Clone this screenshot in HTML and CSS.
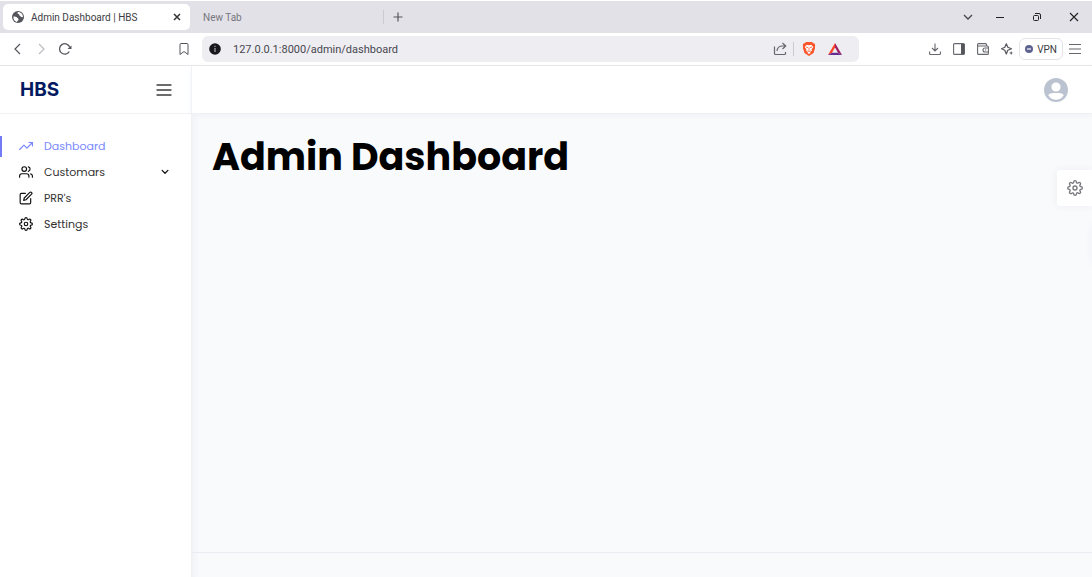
FILE: index.html
```html
<!DOCTYPE html>
<html lang="en">
<head>
<meta charset="utf-8">
<meta name="viewport" content="width=device-width, initial-scale=1">
<title>Admin Dashboard | HBS</title>
<link rel="stylesheet" href="styles.css">
</head>
<body>
<div class="browser">
  <div class="tabs">
    <div class="tab tab-active">
      <svg class="i12" viewBox="0 0 24 24"><circle cx="12" cy="12" r="12" fill="#55565c"/><path fill="#fff" d="M3 11c3 0 6 0 7 2s3 1 3 4-3 2-3 5C6 21 2 17 3 11zM12 2c-2 2-1 4 1 4s1 3 3 4 2 3 6 2c0-5-4-10-10-10z"/></svg>
      <span class="tab-title">Admin Dashboard | HBS</span>
      <button class="plain" aria-label="Close tab"><svg class="i8" viewBox="0 0 8 8"><path d="M1 1l6 6M7 1L1 7" stroke="#333338" stroke-width="1.5"/></svg></button>
    </div>
    <div class="tab tab-idle"><span class="tab-title">New Tab</span></div>
    <button class="plain new-tab" aria-label="New tab"><svg class="i10" viewBox="0 0 10 10"><path d="M5 .5v9M.5 5h9" stroke="#55565c" stroke-width="1.2"/></svg></button>
    <div class="window-controls">
      <button class="plain search-tabs" aria-label="Search tabs"><svg class="i10" viewBox="0 0 10 10"><path d="M1 3l4 4 4-4" stroke="#44454b" stroke-width="1.3"/></svg></button>
      <button class="plain" aria-label="Minimize"><svg class="i10" viewBox="0 0 10 10"><path d="M1 5.5h8" stroke="#222" stroke-width="1"/></svg></button>
      <button class="plain" aria-label="Restore"><svg class="i10" viewBox="0 0 10 10"><rect x="1.500" y="3.500" width="5" height="5" rx="1" stroke="#222"/><path d="M3 1.500h4a1.500 1.500 0 0 1 1.500 1.500V7" stroke="#222"/></svg></button>
      <button class="plain" aria-label="Close"><svg class="i10" viewBox="0 0 10 10"><path d="M1 1l8 8M9 1L1 9" stroke="#222" stroke-width="1.1"/></svg></button>
    </div>
  </div>
  <div class="toolbar">
    <div class="nav-buttons">
      <button class="plain" aria-label="Back"><svg class="i12" viewBox="0 0 12 12"><path d="M9 1L4 6l5 5" stroke="#55565c" stroke-width="1.2"/></svg></button>
      <button class="plain" aria-label="Forward"><svg class="i12" viewBox="0 0 12 12"><path d="M4 1l5 5-5 5" stroke="#bcbcc2" stroke-width="1.2"/></svg></button>
      <button class="plain" aria-label="Reload"><svg class="i14" viewBox="0 0 14 14"><path d="M10.300 9.500A5.200 5.200 0 1 1 10.800 5.500" stroke="#55565c" stroke-width="1.3"/><path d="M12.500 3.500v3.500H8.500z" fill="#55565c"/></svg></button>
    </div>
    <button class="plain bookmark" aria-label="Bookmark"><svg class="i12" viewBox="0 0 12 12"><path d="M2 1.500a1 1 0 0 1 1-1h6a1 1 0 0 1 1 1v10L6 8.500l-4 3z" stroke="#55565c"/></svg></button>
    <div class="address">
      <svg class="i12" viewBox="0 0 12 12"><circle cx="6" cy="6" r="5.800" fill="#18181c"/><path d="M6 2.800v1.200M6 5v4" stroke="#c8c8cc" stroke-width="1"/></svg>
      <input class="url" type="text" aria-label="Address" value="127.0.0.1:8000/admin/dashboard">
      <button class="plain share" aria-label="Share"><svg class="i14" viewBox="0 0 14 14"><path d="M1.500 4.500v7a1 1 0 0 0 1 1h9a1 1 0 0 0 1-1V10M4 9c.3-3 2-5 5.500-5H12M9.500 1l3.200 3-3.200 3" stroke="#66676d" stroke-width="1.2"/></svg></button>
      <span class="divider"></span>
      <button class="plain" aria-label="Brave Shields"><svg class="i14" viewBox="0 0 14 14"><path fill="#fb542b" d="M4 0h6l1.300 1.300 1.300.2.700 2.300-.5.800.3 1.400-1.600 5-4.500 3-4.500-3L.900 6l.3-1.400-.5-.8.700-2.300 1.300-.2z"/><path fill="#fff" d="M4.700 2.800L7 3.200l2.300-.4 1.900 2.300-1.600 2.400.4 1.200L7.800 10l1 .8L7 12l-1.800-1.200 1-.8L4 8.700l.4-1.200-1.600-2.400z"/><path d="M4 5l2 .6M10 5l-2 .6M7 5.500v3M5.500 8.700L7 9.500l1.500-.8" stroke="#fb542b" stroke-width=".8"/></svg></button>
      <button class="plain" aria-label="Brave Rewards"><svg class="i14" viewBox="0 0 14 14"><path fill="#ff4724" d="M7 1L0 13l4-2.300L7 5.500z"/><path fill="#9e1f63" d="M7 1l7 12-4-2.300L7 5.500z"/><path fill="#662d91" d="M0 13h14l-4-2.300H4z"/></svg></button>
    </div>
    <div class="tools">
      <button class="plain" aria-label="Downloads"><svg class="i12" viewBox="0 0 12 12"><path d="M6 .500v7.500M3 5l3 3 3-3M.6 8.500v2a1 1 0 0 0 1 1h8.800a1 1 0 0 0 1-1v-2" stroke="#66676d" stroke-width="1.1"/></svg></button>
      <button class="plain" aria-label="Sidebar"><svg class="i12" viewBox="0 0 12 12"><rect x=".6" y=".6" width="10.800" height="10.800" rx="1" stroke="#66676d" stroke-width="1.1"/><path fill="#55565c" d="M8 1h3.500v10H8z"/></svg></button>
      <button class="plain" aria-label="Wallet"><svg class="i12" viewBox="0 0 12 12"><path d="M9.500 3V1.600a1 1 0 0 0-1-1H1.600a1 1 0 0 0-1 1v8.800a1 1 0 0 0 1 1h8.800a1 1 0 0 0 1-1V4a1 1 0 0 0-1-1H.6M11.400 5H8a2 2 0 0 0 0 4h3.400M8 7h1.200" stroke="#66676d" stroke-width="1.1"/></svg></button>
      <button class="plain" aria-label="Leo AI"><svg class="i12" viewBox="0 0 12 12"><path d="M5.300.8l1.500 3.400 3.700 1.500-3.700 1.500-1.500 3.700-1.500-3.700L.6 5.700l3.200-1.500z" stroke="#55565c" stroke-width="1.2" stroke-linejoin="round"/><path d="M10.200 8l.5 1.500 1.300.5-1.300.5-.5 1.500-.5-1.500L8 10l1.700-.5z" fill="#44454b"/></svg></button>
      <button class="vpn"><svg class="i8" viewBox="0 0 8 8"><circle cx="4" cy="4" r="4" fill="#5d6290"/><path d="M2 4h4" stroke="#fff" stroke-width="1.2"/></svg>VPN</button>
      <button class="plain" aria-label="Menu"><svg class="i12" viewBox="0 0 12 12"><path d="M0 1.500h12M0 6h12M0 10.500h12" stroke="#66676d" stroke-width="1.1"/></svg></button>
    </div>
  </div>
</div>

<div class="app">
  <aside class="sidebar">
    <div class="brand-bar">
      <a class="brand" href="#">HBS</a>
      <button class="plain" aria-label="Toggle menu"><svg class="i16" viewBox="0 0 16 16"><path d="M1 3h14M1 8h14M1 13h14" stroke="#3c3c3c" stroke-width="1.3" stroke-linecap="round"/></svg></button>
    </div>
    <nav class="menu">
      <a class="item active" href="#"><svg class="i14 line" viewBox="0 0 24 24"><path d="M23 6l-9.500 9.500-5-5L1 18M17 6h6v6"/></svg><span>Dashboard</span></a>
      <a class="item" href="#"><svg class="i14 line" viewBox="0 0 24 24"><path d="M17 21v-2a4 4 0 0 0-4-4H5a4 4 0 0 0-4 4v2M23 21v-2a4 4 0 0 0-3-3.870M16 3.130a4 4 0 0 1 0 7.750"/><circle cx="9" cy="7" r="4"/></svg><span>Customars</span><svg class="i10 line chevron" viewBox="0 0 24 24"><path d="M5 8l7 7 7-7"/></svg></a>
      <a class="item" href="#"><svg class="i14 line" viewBox="0 0 24 24"><path d="M11 4H4a2 2 0 0 0-2 2v14a2 2 0 0 0 2 2h14a2 2 0 0 0 2-2v-7"/><path d="M18.500 2.500a2.120 2.120 0 0 1 3 3L12 15l-4 1 1-4z"/></svg><span>PRR's</span></a>
      <a class="item" href="#"><svg class="i14 line" viewBox="0 0 24 24"><use href="#gear"/></svg><span>Settings</span></a>
    </nav>
  </aside>
  <div class="main">
    <header class="topbar">
      <button class="plain" aria-label="Account"><svg class="i24" viewBox="0 0 24 24"><circle cx="12" cy="12" r="12" fill="#bcc3d0"/><circle cx="12" cy="9" r="4.600" fill="#fff"/><path fill="#fff" d="M4.500 17.500c0-2 3-2.500 7.500-2.500s7.500.5 7.500 2.500c-1.500 2.800-4.500 4.300-7.500 4.300s-6-1.500-7.500-4.300z"/></svg></button>
    </header>
    <main class="content"><h1 class="title">Admin Dashboard</h1></main>
    <footer class="footer"></footer>
  </div>
</div>
<button class="settings-tab" aria-label="Theme settings"><svg class="i16 line" viewBox="0 0 24 24">
  <g id="gear"><circle cx="12" cy="12" r="3"/><path d="M19.400 15a1.650 1.650 0 0 0 .33 1.820l.06.06a2 2 0 0 1 0 2.830 2 2 0 0 1-2.830 0l-.06-.06a1.650 1.650 0 0 0-1.820-.33 1.650 1.650 0 0 0-1 1.510V21a2 2 0 0 1-2 2 2 2 0 0 1-2-2v-.09A1.650 1.650 0 0 0 9 19.400a1.650 1.650 0 0 0-1.820.33l-.06.06a2 2 0 0 1-2.830 0 2 2 0 0 1 0-2.830l.06-.06a1.650 1.650 0 0 0 .33-1.820 1.650 1.650 0 0 0-1.510-1H3a2 2 0 0 1-2-2 2 2 0 0 1 2-2h.09A1.650 1.650 0 0 0 4.600 9a1.650 1.650 0 0 0-.33-1.820l-.06-.06a2 2 0 0 1 0-2.830 2 2 0 0 1 2.830 0l.06.06a1.650 1.650 0 0 0 1.820.33H9a1.650 1.650 0 0 0 1-1.510V3a2 2 0 0 1 2-2 2 2 0 0 1 2 2v.09a1.650 1.650 0 0 0 1 1.510 1.650 1.650 0 0 0 1.820-.33l.06-.06a2 2 0 0 1 2.830 0 2 2 0 0 1 0 2.830l-.06.06a1.650 1.650 0 0 0-.33 1.820V9a1.650 1.650 0 0 0 1.510 1H21a2 2 0 0 1 2 2 2 2 0 0 1-2 2h-.09a1.650 1.650 0 0 0-1.510 1z"/></g></svg></button>
</body>
</html>
```
FILE: styles.css
```css
* { box-sizing: border-box; }
body {
  margin: 0;
  min-height: 100vh;
  display: flex;
  flex-direction: column;
  font-family: Poppins, Inter, sans-serif;
  color: #333;
  background: #fff;
}
svg { display: block; flex: none; fill: none; }
button { font: inherit; color: inherit; }
a { color: inherit; text-decoration: none; }
.plain { padding: 0; border: 0; background: none; }
.i8 { width: 8px; height: 8px; }
.i10 { width: 10px; height: 10px; }
.i12 { width: 12px; height: 12px; }
.i14 { width: 14px; height: 14px; }
.i16 { width: 16px; height: 16px; }
.i24 { width: 24px; height: 24px; }
.line { stroke: currentColor; stroke-width: 2; stroke-linecap: round; stroke-linejoin: round; }

.browser { font-family: Roboto, "Open Sans", sans-serif; font-size: 10px; color: #3c3c42; }
.tabs { display: flex; align-items: center; height: 33px; background: #e2e1e7; border-top: 1px solid #fff; padding-left: 3px; }
.tab { display: flex; align-items: center; height: 26px; }
.tab-active { width: 187px; gap: 7px; padding: 0 9px; background: #fff; border-radius: 5px; }
.tab-title { flex: 1; white-space: nowrap; }
.tab-idle { width: 194px; height: 14px; padding-left: 13px; color: #77777e; border-right: 1px solid #cbcad1; }
.new-tab { margin-left: 9px; }
.window-controls { display: flex; gap: 27px; margin-left: auto; padding-right: 13px; }
.search-tabs { margin-right: -5px; }

.toolbar { display: flex; align-items: center; height: 33px; border-bottom: 1px solid #e4e4e8; padding: 0 11px; }
.nav-buttons { display: flex; align-items: center; gap: 12px; width: 167px; }
.bookmark { margin-right: 12px; }
.address { display: flex; align-items: center; flex: 1; height: 26px; padding: 0 17px 0 7px; gap: 12px; background: #eeedf2; border-radius: 6px; }
.url { flex: 1; min-width: 0; padding: 0; border: 0; outline: 0; background: none; font: inherit; font-size: 11px; color: #48484f; }
.share + .divider { width: 1px; height: 14px; margin: 0 -4px 0 -6px; background: #cbcad1; }
.tools { display: flex; align-items: center; gap: 12px; margin-left: 70px; }
.vpn { display: flex; align-items: center; gap: 4px; height: 22px; margin: 0 -6px; padding: 0 5px; border: 1px solid #e4e4e8; border-radius: 6px; background: #fff; }

.app { display: flex; flex: 1; }
.sidebar { width: 192px; border-right: 1px solid #f0f1f4; }
.brand-bar { display: flex; align-items: center; justify-content: space-between; height: 48px; padding: 0 19px 0 20px; border-bottom: 1px solid #f0f1f4; }
.brand { font-family: Inter, sans-serif; font-size: 19px; font-weight: 700; color: #031a61; }
.menu { padding-top: 19px; }
.item { display: flex; align-items: center; height: 26px; padding: 0 21px 0 19px; font-size: 11px; }
.item span { padding-left: 11px; }
.item svg { color: #111; }
.item.active, .item.active svg { color: #7987ff; }
.item.active { background: linear-gradient(#727cf5, #727cf5) left center / 2px 21px no-repeat; }
.item .chevron { margin-left: auto; stroke-width: 3; }
.main { flex: 1; display: flex; flex-direction: column; background: #f9fafc; }
.topbar { display: flex; align-items: center; justify-content: flex-end; height: 48px; padding-right: 24px; background: #fff; border-bottom: 1px solid #f0f1f4; box-shadow: 0 2px 6px #eff1f5; }
.content { flex: 1; padding: 18px 20px; box-shadow: inset 8px 0 8px -8px #e9ebf1; }
.title { margin: 0; font-size: 38px; line-height: 50px; font-weight: 700; color: #000; }
.footer { height: 25px; border-top: 1px solid #e9ecf2; box-shadow: inset 8px 0 8px -8px #e9ebf1; }
.settings-tab { position: fixed; top: 170px; right: 0; display: grid; place-items: center; width: 35px; height: 36px; padding: 0; border: 0; border-radius: 3px 0 0 3px; background: #fff; color: #77777c; box-shadow: 0 0 8px #eceef3, 36px 56px 10px #eceef3; }
```
